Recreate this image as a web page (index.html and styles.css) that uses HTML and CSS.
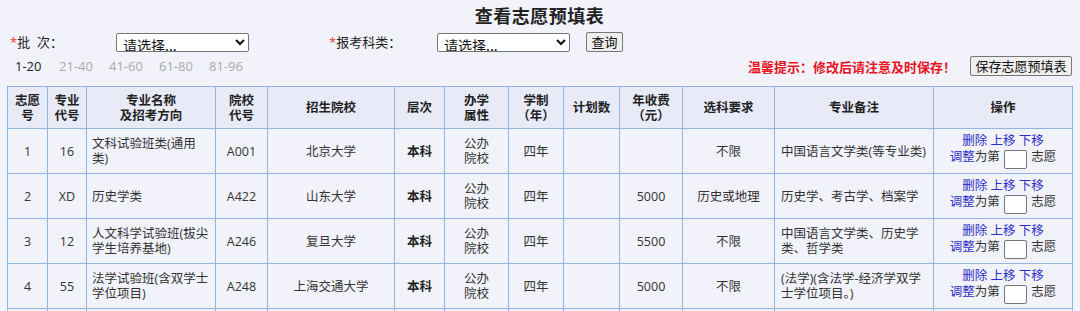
FILE: index.html
```html
<!DOCTYPE html>
<html lang="zh">
<head>
<meta charset="utf-8">
<title>查看志愿预填表</title>
<link rel="stylesheet" href="styles.css">
</head>
<body>
<div class="page">
  <h1 class="title">查看志愿预填表</h1>
  <div class="filters">
    <label class="lbl lbl-batch"><span class="star">*</span>批&nbsp;&nbsp;次：</label>
    <select class="sel"><option>请选择...</option></select>
    <label class="lbl lbl-type"><span class="star">*</span>报考科类：</label>
    <select class="sel"><option>请选择...</option></select>
    <button class="btn btn-query">查询</button>
  </div>
  <div class="bar">
    <div class="pager">
      <span class="pg cur">1-20</span>
      <span class="pg">21-40</span>
      <span class="pg">41-60</span>
      <span class="pg">61-80</span>
      <span class="pg">81-96</span>
    </div>
    <div class="save">
      <span class="warn">温馨提示：修改后请注意及时保存！</span>
      <button class="btn btn-save">保存志愿预填表</button>
    </div>
  </div>
  <table class="grid">
    <colgroup>
      <col class="c1"><col class="c2"><col class="c3"><col class="c4"><col class="c5"><col class="c6"><col class="c7"><col class="c8"><col class="c9"><col class="c10"><col class="c11"><col class="c12"><col class="c13">
    </colgroup>
    <thead>
      <tr>
        <th>志愿<br>号</th>
        <th>专业<br>代号</th>
        <th>专业名称<br>及招考方向</th>
        <th>院校<br>代号</th>
        <th>招生院校</th>
        <th>层次</th>
        <th>办学<br>属性</th>
        <th>学制<br>（年）</th>
        <th>计划数</th>
        <th>年收费<br>（元）</th>
        <th>选科要求</th>
        <th>专业备注</th>
        <th>操作</th>
      </tr>
    </thead>
    <tbody>
      <tr>
        <td>1</td><td>16</td><td class="left">文科试验班类(通用类)</td><td>A001</td><td>北京大学</td><td class="bold">本科</td><td>公办<br>院校</td><td>四年</td><td></td><td></td><td>不限</td><td class="note">中国语言文学类(等专业类)</td>
        <td class="ops"><a href="#">删除</a> <a href="#">上移</a> <a href="#">下移</a><br><a href="#">调整</a>为第 <input class="pos" type="text"> 志愿</td>
      </tr>
      <tr>
        <td>2</td><td>XD</td><td class="left">历史学类</td><td>A422</td><td>山东大学</td><td class="bold">本科</td><td>公办<br>院校</td><td>四年</td><td></td><td>5000</td><td>历史或地理</td><td class="note">历史学、考古学、档案学</td>
        <td class="ops"><a href="#">删除</a> <a href="#">上移</a> <a href="#">下移</a><br><a href="#">调整</a>为第 <input class="pos" type="text"> 志愿</td>
      </tr>
      <tr>
        <td>3</td><td>12</td><td class="left">人文科学试验班(拔尖学生培养基地)</td><td>A246</td><td>复旦大学</td><td class="bold">本科</td><td>公办<br>院校</td><td>四年</td><td></td><td>5500</td><td>不限</td><td class="note">中国语言文学类、历史学类、哲学类</td>
        <td class="ops"><a href="#">删除</a> <a href="#">上移</a> <a href="#">下移</a><br><a href="#">调整</a>为第 <input class="pos" type="text"> 志愿</td>
      </tr>
      <tr>
        <td>4</td><td>55</td><td class="left">法学试验班(含双学士学位项目)</td><td>A248</td><td>上海交通大学</td><td class="bold">本科</td><td>公办<br>院校</td><td>四年</td><td></td><td>5000</td><td>不限</td><td class="note">(法学)(含法学-经济学双学士学位项目。)</td>
        <td class="ops"><a href="#">删除</a> <a href="#">上移</a> <a href="#">下移</a><br><a href="#">调整</a>为第 <input class="pos" type="text"> 志愿</td>
      </tr>
      <tr>
        <td>5</td><td></td><td class="left"></td><td></td><td></td><td></td><td></td><td></td><td></td><td></td><td></td><td class="note"></td><td></td>
      </tr>
    </tbody>
  </table>
</div>
</body>
</html>
```
FILE: styles.css
```css
html, body {
  margin: 0;
  padding: 0;
  background: #f1f2fa;
}
body {
  font-family: "Open Sans", "Noto Sans CJK SC", sans-serif;
  font-size: 13px;
  color: #222;
}
.page {
  padding: 0 8px 0 7px;
}
.title {
  margin: 0;
  height: 31px;
  font-family: "Noto Sans CJK SC", sans-serif;
  font-size: 18px;
  line-height: 31px;
  font-weight: bold;
  text-align: center;
  color: #222;
  letter-spacing: 0.5px;
}
.filters {
  display: flex;
  align-items: center;
  height: 22px;
  padding-left: 3px;
}
.lbl {
  line-height: 18px;
}
.lbl-batch { width: 106px; }
.lbl-type { width: 108px; margin-left: 80px; }
.star { color: #e33; }
.sel {
  width: 133px;
  height: 19px;
  padding: 0 2px;
  font-family: "Noto Sans CJK SC", sans-serif;
  font-size: 14px;
  line-height: 17px;
  border: 1px solid #767676;
  border-radius: 2px;
  background: #fff;
  color: #111;
}
.btn {
  font-family: "Noto Sans CJK SC", sans-serif;
  font-size: 13px;
  line-height: 16px;
  height: 20px;
  padding: 0 4px;
  border: 1px solid #767676;
  border-radius: 2px;
  background: #efefef;
  color: #111;
}
.btn-query { margin-left: 16px; width: 37px; }
.bar {
  display: flex;
  justify-content: space-between;
  align-items: center;
  height: 24px;
  margin-top: 1px;
}
.pager {
  display: flex;
  padding-left: 8px;
}
.pg {
  width: 50px;
  color: #aaa;
  font-size: 13px;
}
.pg.cur { width: 44px; color: #222; }
.save {
  display: flex;
  align-items: center;
}
.warn {
  color: #e8141e;
  font-weight: bold;
  margin-right: 14px;
}
.btn-save { width: 102px; padding: 0; }
.grid {
  margin-top: 8px;
  border-collapse: collapse;
  table-layout: fixed;
  width: 1066px;
  border: 1px solid #8fb6e0;
  font-size: 12.5px;
}
.grid th, .grid td {
  border: 1px solid #8fb6e0;
  text-align: center;
  vertical-align: middle;
  line-height: 15px;
  padding: 0;
  color: #333;
}
.grid th {
  background: #e9eaf8;
  height: 41px;
  font-weight: bold;
  color: #222;
}
.grid td {
  height: 44px;
}
.grid td.left {
  text-align: left;
  padding-left: 5px;
  padding-right: 5px;
}
.grid td.note {
  text-align: left;
  padding-left: 6px;
  padding-right: 1px;
}
.grid td.bold {
  font-weight: bold;
  color: #222;
}
.grid td.ops {
  line-height: 16px;
}
.ops a {
  color: #2c2cc8;
  text-decoration: none;
}
.pos {
  width: 21px;
  height: 17px;
  padding: 0;
  margin: 0 1px;
  border: 1px solid #767676;
  border-radius: 2px;
  background: #fff;
  vertical-align: -3px;
}
col.c1 { width: 40px; }
col.c2 { width: 39px; }
col.c3 { width: 129px; }
col.c4 { width: 52px; }
col.c5 { width: 127px; }
col.c6 { width: 50px; }
col.c7 { width: 64px; }
col.c8 { width: 55px; }
col.c9 { width: 56px; }
col.c10 { width: 63px; }
col.c11 { width: 92px; }
col.c12 { width: 159px; }
col.c13 { width: 139px; }
```
